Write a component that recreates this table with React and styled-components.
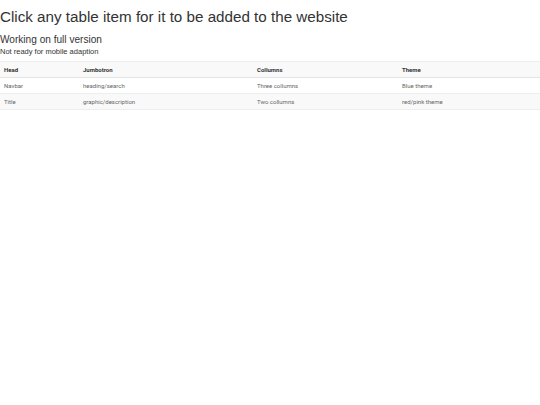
import React from 'react'
import styled, { createGlobalStyle } from 'styled-components'

const rows = [
  ['Navbar', 'heading/search', 'Three collumns', 'Blue theme'],
  ['Title', 'graphic/description', 'Two collumns', 'red/pink theme'],
]

export default function App() {
  return (
    <Page>
      <GlobalStyle />
      <Title>Click any table item for it to be added to the website</Title>
      <Subtitle>Working on full version</Subtitle>
      <Note>Not ready for mobile adaption</Note>
      <Table>
        <thead>
          <tr>
            <Th w={79}>Head</Th>
            <Th w={174}>Jumbotron</Th>
            <Th w={145}>Collumns</Th>
            <Th>Theme</Th>
          </tr>
        </thead>
        <tbody>
          {rows.map((r, i) => (
            <Row key={i} striped={i % 2 === 1}>
              {r.map(c => (
                <Td key={c}>{c}</Td>
              ))}
            </Row>
          ))}
        </tbody>
      </Table>
    </Page>
  )
}

const GlobalStyle = createGlobalStyle`
  body {
    margin: 0;
    background: #fff;
    font-family: "Liberation Sans", Arial, sans-serif;
    color: #333;
  }
`

const Page = styled.div`
  display: flex;
  flex-direction: column;
`

const Title = styled.h1`
  margin: 7px 0 0;
  font-size: 15.2px;
  font-weight: 400;
  line-height: 20px;
  color: #333;
`

const Subtitle = styled.h3`
  margin: 7px 0 0;
  font-size: 10.1px;
  font-weight: 400;
  line-height: 12px;
  color: #333;
`

const Note = styled.p`
  margin: 1px 0 0;
  font-size: 7.5px;
  line-height: 10px;
  color: #333;
`

const Table = styled.table`
  width: 540px;
  margin-top: 4px;
  border-collapse: collapse;
  font-family: Roboto, "Liberation Sans", sans-serif;
  font-size: 6px;
  color: #666;
  table-layout: fixed;
`

const Th = styled.th`
  box-sizing: border-box;
  width: ${p => (p.w ? `${p.w}px` : 'auto')};
  text-align: left;
  font-weight: 700;
  color: #333;
  height: 16px;
  padding: 0 4px;
  background: #f9f9f9;
  border-top: 1px solid #eee;
  border-bottom: 1px solid #e4e4e4;
`

const Row = styled.tr`
  background: ${p => (p.striped ? '#f9f9f9' : '#fff')};
`

const Td = styled.td`
  height: 15px;
  padding: 0 4px;
  border-bottom: 1px solid #eee;
`
